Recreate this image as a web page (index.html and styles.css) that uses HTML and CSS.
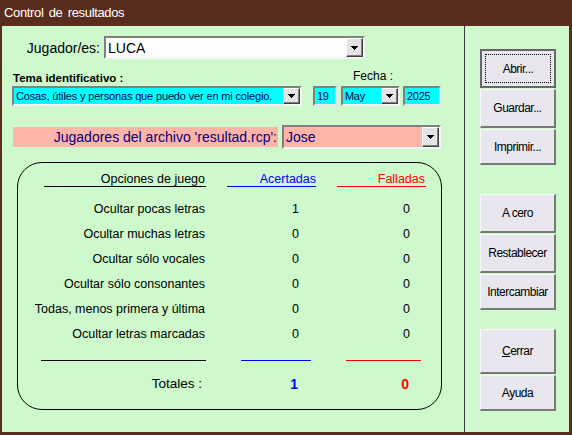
FILE: index.html
```html
<!DOCTYPE html>
<html lang="es">
<head>
	<meta charset="UTF-8">
	<title>Control de resultados</title>
	<link rel="stylesheet" href="styles.css">
</head>
<body>
<div class="window">
	<div class="titlebar">Control de resultados</div>
	<div class="client">
		<div class="main">
			<div class="player-row">
				<span class="player-label">Jugador/es:</span>
				<div class="combo combo-player">
					<span class="combo-text">LUCA</span>
					<span class="drop-btn"><svg width="7" height="4" viewBox="0 0 7 4"><polygon points="0,0 7,0 3.5,4" fill="#000"/></svg></span>
				</div>
			</div>

			<div class="caption-row">
				<span class="topic-caption">Tema identificativo :</span>
				<span class="date-caption">Fecha :</span>
			</div>

			<div class="topic-row">
				<div class="combo cyan combo-topic">
					<span class="combo-text">Cosas, útiles y personas que puedo ver en mi colegio.</span>
					<span class="drop-btn"><svg width="7" height="4" viewBox="0 0 7 4"><polygon points="0,0 7,0 3.5,4" fill="#000"/></svg></span>
				</div>
				<div class="field cyan day">19</div>
				<div class="combo cyan month">
					<span class="combo-text">May</span>
					<span class="drop-btn"><svg width="7" height="4" viewBox="0 0 7 4"><polygon points="0,0 7,0 3.5,4" fill="#000"/></svg></span>
				</div>
				<div class="field cyan year">2025</div>
			</div>

			<div class="file-row">
				<div class="file-label">Jugadores del archivo 'resultad.rcp':</div>
				<div class="combo salmon combo-file">
					<span class="combo-text">Jose</span>
					<span class="drop-btn"><svg width="7" height="4" viewBox="0 0 7 4"><polygon points="0,0 7,0 3.5,4" fill="#000"/></svg></span>
				</div>
			</div>

			<!-- tabla de resultados -->
			<div class="results">
				<div class="res-row res-head">
					<span class="head-cell">Opciones de juego</span>
					<span class="head-cell blue">Acertadas</span>
					<span class="head-cell red">Falladas</span>
				</div>
				<div class="res-row res-data first">
					<span class="opt">Ocultar pocas letras</span><span class="hit">1</span><span class="miss">0</span>
				</div>
				<div class="res-row res-data">
					<span class="opt">Ocultar muchas letras</span><span class="hit">0</span><span class="miss">0</span>
				</div>
				<div class="res-row res-data">
					<span class="opt">Ocultar sólo vocales</span><span class="hit">0</span><span class="miss">0</span>
				</div>
				<div class="res-row res-data">
					<span class="opt">Ocultar sólo consonantes</span><span class="hit">0</span><span class="miss">0</span>
				</div>
				<div class="res-row res-data">
					<span class="opt">Todas, menos primera y última</span><span class="hit">0</span><span class="miss">0</span>
				</div>
				<div class="res-row res-data">
					<span class="opt">Ocultar letras marcadas</span><span class="hit">0</span><span class="miss">0</span>
				</div>
				<div class="res-row res-sep">
					<span class="sep sep-opt"></span>
					<span class="sep sep-hit"></span>
					<span class="sep sep-miss"></span>
				</div>
				<div class="res-row res-total">
					<span class="opt">Totales :</span><span class="hit">1</span><span class="miss">0</span>
				</div>
			</div>
		</div>

		<div class="side">
			<div class="btn-group">
				<div class="btn default">Abrir...</div>
				<div class="btn">Guardar...</div>
				<div class="btn">Imprimir...</div>
			</div>
			<div class="btn-group second">
				<div class="btn">A cero</div>
				<div class="btn">Restablecer</div>
				<div class="btn">Intercambiar</div>
			</div>
			<div class="btn-group third">
				<div class="btn tall"><span class="accel">C</span>errar</div>
				<div class="btn">Ayuda</div>
			</div>
		</div>
	</div>
</div>
</body>
</html>
```

FILE: styles.css
```css
* {
	box-sizing: border-box;
}
body {
	margin: 0;
	font-family: "Liberation Sans", Arial, sans-serif;
	background: #5a2c1e;
}

.window {
	width: 572px;
	height: 435px;
	background: #5a2c1e;
	padding: 0 3px 3px 2px;
	display: flex;
	flex-direction: column;
}

.titlebar {
	height: 26px;
	line-height: 25px;
	padding-left: 2px;
	color: #fff;
	font-size: 13px;
	letter-spacing: -0.35px;
	word-spacing: 2px;
}

.client {
	flex: 1;
	display: flex;
	background: #cdf9cd;
}

/* LEFT PART */
.main {
	width: 463px;
	padding-top: 10px;
	border-right: 1px solid #3a3a3a;
}

.player-row {
	display: flex;
	align-items: center;
	height: 23px;
}

.player-label {
	width: 98px;
	margin-right: 4px;
	text-align: right;
	font-size: 14px;
}

.combo {
	position: relative;
	display: flex;
	align-items: center;
	border: 2px solid;
	border-color: #808080 #f4f4f4 #f4f4f4 #808080;
	background: #fff;
}

.combo-text {
	flex: 1;
	padding-left: 2px;
	white-space: nowrap;
	overflow: hidden;
}

.drop-btn {
	width: 17px;
	align-self: stretch;
	display: flex;
	align-items: center;
	justify-content: center;
	background: #e4e4e4;
	border: 1px solid;
	border-color: #fff #404040 #404040 #fff;
	box-shadow: inset -1px -1px 0 #808080;
}
.drop-btn svg {
	display: block;
	shape-rendering: crispEdges;
}

.combo-player {
	width: 261px;
	height: 23px;
	font-size: 14px;
}

.caption-row {
	height: 27px;
	display: flex;
	align-items: flex-end;
	padding-left: 11px;
	line-height: 14px;
	padding-bottom: 1px;
}

.topic-caption {
	width: 340px;
	font-size: 11.5px;
	font-weight: bold;
}

.date-caption {
	font-size: 12px;
	position: relative;
	top: -2px;
}

.topic-row {
	display: flex;
	height: 20px;
	padding-left: 10px;
	font-size: 11px;
	color: #000050;
}

.cyan {
	background: #00ffff;
}

.field {
	border: 2px solid;
	border-color: #808080 #e8e8e8 #e8e8e8 #808080;
	padding-left: 2px;
	line-height: 16px;
	letter-spacing: -0.3px;
}

.combo-topic {
	width: 290px;
	letter-spacing: -0.15px;
}

.day {
	width: 24px;
	margin-left: 11px;
}

.month {
	width: 59px;
	margin-left: 4px;
	letter-spacing: -0.3px;
}

.year {
	width: 38px;
	margin-left: 3px;
}

.file-row {
	display: flex;
	align-items: center;
	margin-top: 19px;
	height: 24px;
	padding-left: 11px;
	font-size: 14px;
	color: #000080;
}

.salmon {
	background: #ffb4a8;
}

.file-label {
	width: 265px;
	height: 20px;
	line-height: 20px;
	text-align: right;
	padding-right: 1px;
	background: #ffb4a8;
	margin-right: 4px;
}

.combo-file {
	width: 159px;
	height: 24px;
}

/* RESULTS TABLE */
.results {
	width: 425px;
	height: 248px;
	margin: 13px 0 0 15px;
	border: 1px solid #000;
	border-radius: 25px;
	padding-top: 10px;
	font-size: 12.5px;
	color: #000;
}

.res-row {
	display: grid;
	grid-template-columns: 188px 110px 110px;
}

.head-cell {
	margin-left: 21px;
	line-height: 13px;
	text-align: right;
	border-bottom: 1px solid #000;
}
.head-cell:first-child {
	margin-left: 26px;
	padding-right: 1px;
}
.head-cell.blue {
	color: #0000ff;
	border-bottom-color: #0000ff;
}
.head-cell.red {
	color: #ff0000;
	border-bottom-color: #ff0000;
	padding-right: 1px;
}

.res-data {
	height: 25px;
	line-height: 25px;
}
.res-data.first {
	margin-top: 10px;
}

.opt {
	text-align: right;
	padding-right: 1px;
	white-space: nowrap;
}

.hit {
	text-align: right;
	padding-right: 17px;
}

.miss {
	text-align: right;
	padding-right: 16px;
}

.res-sep {
	margin-top: 13px;
	height: 1px;
}
.sep {
	height: 1px;
}
.sep-opt {
	margin-left: 23px;
	background: #000;
}
.sep-hit {
	margin: 0 5px 0 35px;
	background: #0000ff;
}
.sep-miss {
	margin: 0 5px 0 30px;
	background: #ff0000;
}

.res-total {
	margin-top: 13px;
	height: 20px;
	line-height: 20px;
	font-size: 13.5px;
}
.res-total .opt {
	padding-right: 4px;
}
.res-total .hit {
	color: #0000ff;
	font-weight: bold;
	font-size: 14px;
	padding-right: 18px;
}
.res-total .miss {
	color: #ff0000;
	font-weight: bold;
	font-size: 14px;
	padding-right: 17px;
}

/* BUTTONS */
.side {
	flex: 1;
	padding: 23px 0 0 15px;
}

.btn-group {
	display: flex;
	flex-direction: column;
	gap: 1px;
	width: 76px;
}
.btn-group.second {
	margin-top: 29px;
}
.btn-group.third {
	margin-top: 19px;
}

.btn {
	height: 39px;
	display: flex;
	align-items: center;
	justify-content: center;
	background: #e8e6ee;
	border-style: solid;
	border-width: 1px 2px 2px 1px;
	border-color: #f8f8f8 #787878 #787878 #f8f8f8;
	font-size: 12px;
	letter-spacing: -0.5px;
	color: #000;
}
.btn:last-child {
	height: 36px;
}
.btn.tall {
	height: 45px;
}

.btn.default {
	border: 2px solid #686868;
	outline: 1px dotted #000;
	outline-offset: -6px;
}

.accel {
	text-decoration: underline;
}
```
